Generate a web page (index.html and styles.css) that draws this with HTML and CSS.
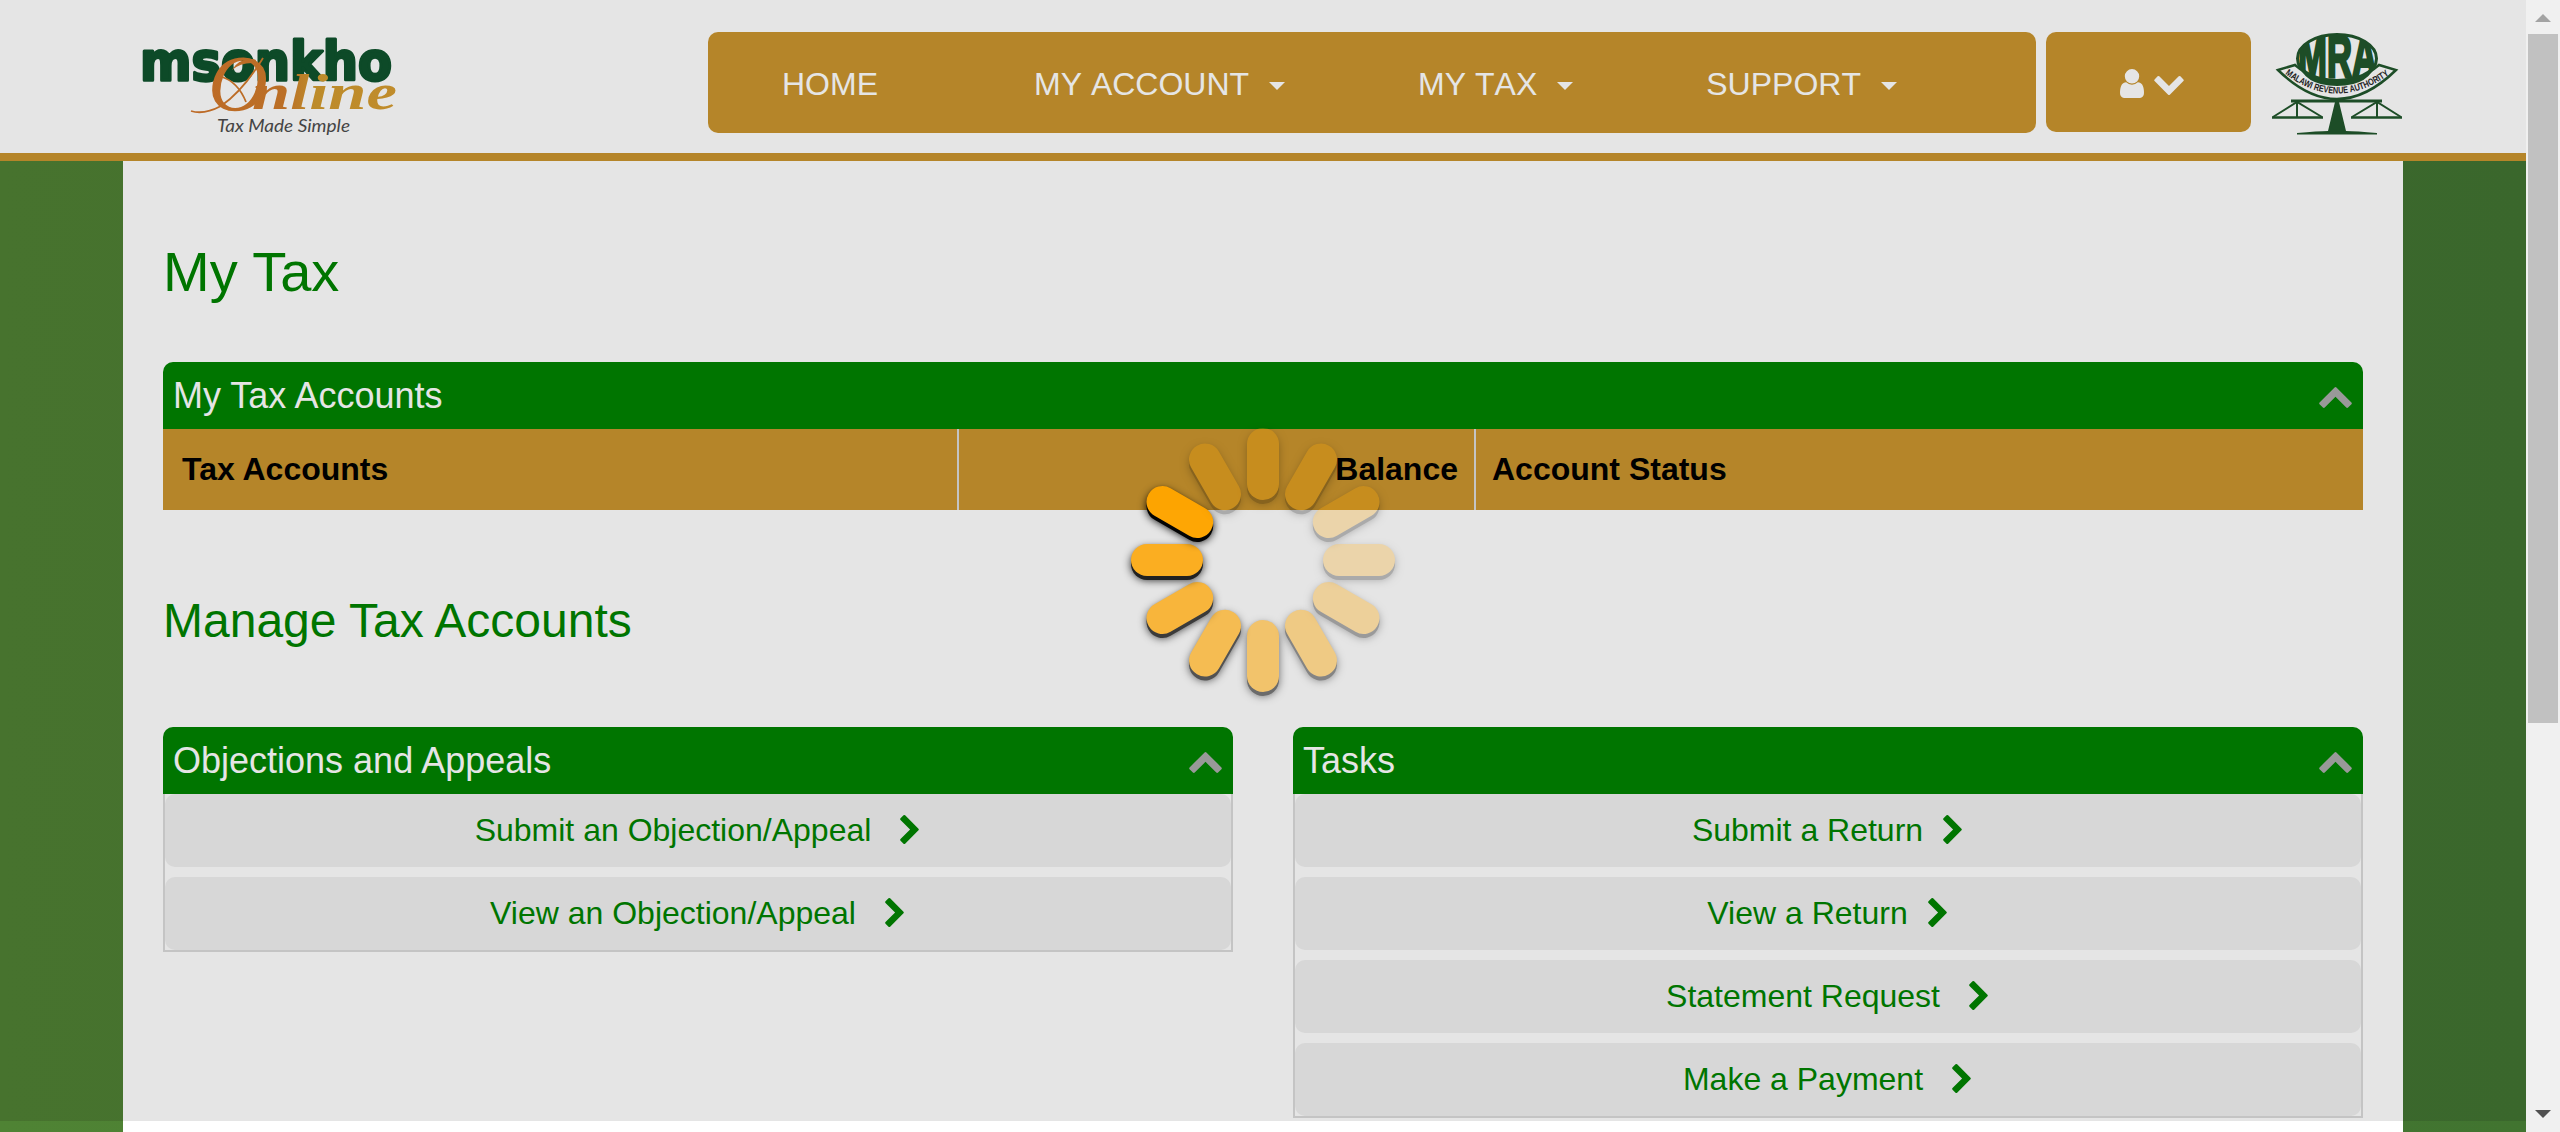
FILE: index.html
```html
<!DOCTYPE html>
<html lang="en">
<head>
<meta charset="utf-8">
<title>Msonkho Online - My Tax</title>
<link rel="stylesheet" href="styles.css">
</head>
<body>
<svg class="defs" width="0" height="0" aria-hidden="true">
  <symbol id="chevron-right" viewBox="154 109 1036 1612"><path d="M1171 960l-742 742q-19 19-45 19t-45-19l-166-166q-19-19-19-45t19-45l531-531-531-531q-19-19-19-45t19-45l166-166q19-19 45-19t45 19l742 742q19 19 19 45t-19 45z"/></symbol>
  <symbol id="chevron-up" viewBox="0 0 1612 1036"><path transform="translate(-109 1190) rotate(-90)" d="M1171 960l-742 742q-19 19-45 19t-45-19l-166-166q-19-19-19-45t19-45l531-531-531-531q-19-19-19-45t19-45l166-166q19-19 45-19t45 19l742 742q19 19 19 45t-19 45z"/></symbol>
  <symbol id="user" viewBox="0 128 1280 1536"><path d="M1280 1399q0 109-62.500 187t-150.500 78h-854q-88 0-150.500-78t-62.500-187q0-85 8.500-160.500t31.500-152 58.500-131 94-89 134.500-34.500q131 128 313 128t313-128q76 0 134.500 34.500t94 89 58.500 131 31.500 152 8.500 160.500zm-256-887q0 159-112.500 271.500t-271.500 112.500-271.500-112.500-112.500-271.500 112.500-271.500 271.500-112.500 271.500 112.500 112.500 271.500z"/></symbol>
</svg>

<div class="page">
  <header class="header">
    <svg class="logo" width="270" height="120" viewBox="135 26 270 120" role="img" aria-label="Msonkho Online">
      <defs><linearGradient id="gold" gradientUnits="userSpaceOnUse" x1="190" y1="0" x2="397" y2="0"><stop offset="0" stop-color="#bd6a27"/><stop offset=".46" stop-color="#bb6f26"/><stop offset=".6" stop-color="#bd8b2a"/><stop offset="1" stop-color="#c08c2b"/></linearGradient></defs>
      <text class="logo-name" x="140" y="80" textLength="252" lengthAdjust="spacingAndGlyphs">msonkho</text>
      <path d="M191 111q13 4 30-5 22-15 42-48M222 77q16 5 24 25" fill="none" stroke="url(#gold)" stroke-width="1.800"/>
      <path d="M232 70q6-11 20-11 6 0 3 4-14-1-23 7z" fill="url(#gold)"/>
      <text class="logo-script logo-initial" x="208" y="111" textLength="60" lengthAdjust="spacingAndGlyphs">O</text>
      <text class="logo-script" x="252" y="109" textLength="145" lengthAdjust="spacingAndGlyphs">nline</text>
      <text class="logo-tag" x="217" y="132" textLength="133" lengthAdjust="spacingAndGlyphs">Tax Made Simple</text>
    </svg>
    <nav class="nav">
      <a class="nav-link nav-home">HOME</a>
      <a class="nav-link">MY ACCOUNT<i class="caret"></i></a>
      <a class="nav-link">MY TAX<i class="caret"></i></a>
      <a class="nav-link">SUPPORT<i class="caret"></i></a>
    </nav>
    <button class="user-button" aria-label="Account">
      <svg width="24" height="29"><use href="#user"/></svg>
      <svg class="down" width="30" height="19"><use href="#chevron-up"/></svg>
    </button>
    <svg class="mra" width="140" height="120" viewBox="2268 20 140 120" role="img" aria-label="Malawi Revenue Authority">
      <defs>
        <path id="ribbon" d="M2285 74Q2337 113 2390 74"/>
        <clipPath id="oval"><ellipse cx="2337" cy="58" rx="40" ry="24"/></clipPath>
      </defs>
      <path d="M2278 70L2295 65Q2337 100 2379 65L2396 70Q2337 128 2278 70Z" fill="#e5e5e5" stroke="#1d4d27" stroke-width="2.500"/>
      <ellipse cx="2337" cy="58.500" rx="39.500" ry="24" fill="#e5e5e5" stroke="#1d4d27" stroke-width="3"/>
      <g clip-path="url(#oval)"><text class="mra-name" x="2298" y="77" textLength="79" lengthAdjust="spacingAndGlyphs">MRA</text></g>
      <path d="M2297 60Q2306 78 2337 79Q2368 78 2377 60Q2371 86 2337 86Q2303 86 2297 60Z" fill="#1d4d27"/>
      <text class="mra-ribbon"><textPath href="#ribbon" textLength="113" lengthAdjust="spacingAndGlyphs">MALAWI REVENUE AUTHORITY</textPath></text>
      <g fill="none" stroke="#1d4d27" stroke-width="2">
        <path d="M2291 101H2382" stroke-width="3"/>
        <path d="M2272 117.500H2323M2351 117.500H2402" stroke-width="2.500"/>
        <path d="M2273 117L2297 102L2322 117M2297 101V117M2352 117L2377 102L2401 117M2377 101V117"/>
      </g>
      <path d="M2335 102H2339L2346 131Q2356 131 2377 133V134.500H2297V133Q2318 131 2328 131Z" fill="#1d4d27"/>
    </svg>
  </header>

  <main class="content">
    <h1 class="title">My Tax</h1>
    <section class="panel">
      <h2 class="panel-head">My Tax Accounts<svg width="33" height="21"><use href="#chevron-up"/></svg></h2>
      <div class="table-head">
        <div class="cell">Tax Accounts</div>
        <div class="cell cell-right">Balance</div>
        <div class="cell">Account Status</div>
      </div>
    </section>
    <h2 class="subtitle">Manage Tax Accounts</h2>
    <div class="columns">
      <section class="panel">
        <h2 class="panel-head">Objections and Appeals<svg width="33" height="21"><use href="#chevron-up"/></svg></h2>
        <div class="links">
          <a class="row wide">Submit an Objection/Appeal<svg width="19" height="29"><use href="#chevron-right"/></svg></a>
          <a class="row wide">View an Objection/Appeal<svg width="19" height="29"><use href="#chevron-right"/></svg></a>
        </div>
      </section>
      <section class="panel">
        <h2 class="panel-head">Tasks<svg width="33" height="21"><use href="#chevron-up"/></svg></h2>
        <div class="links">
          <a class="row">Submit a Return<svg width="19" height="29"><use href="#chevron-right"/></svg></a>
          <a class="row">View a Return<svg width="19" height="29"><use href="#chevron-right"/></svg></a>
          <a class="row wide">Statement Request<svg width="19" height="29"><use href="#chevron-right"/></svg></a>
          <a class="row wide">Make a Payment<svg width="19" height="29"><use href="#chevron-right"/></svg></a>
        </div>
      </section>
    </div>
  </main>
  <div class="page-end"><div class="page-end-body"></div></div>

  <div class="spinner">
    <div class="blade" style="--a:-90deg;opacity:.25"><i></i><b></b></div>
    <div class="blade" style="--a:-60deg;opacity:.25"><i></i><b></b></div>
    <div class="blade" style="--a:-30deg;opacity:.25"><i></i><b></b></div>
    <div class="blade" style="--a:0deg;opacity:.25"><i></i><b></b></div>
    <div class="blade" style="--a:30deg;opacity:.32"><i></i><b></b></div>
    <div class="blade" style="--a:60deg;opacity:.42"><i></i><b></b></div>
    <div class="blade" style="--a:90deg;opacity:.53"><i></i><b></b></div>
    <div class="blade" style="--a:120deg;opacity:.64"><i></i><b></b></div>
    <div class="blade" style="--a:150deg;opacity:.74"><i></i><b></b></div>
    <div class="blade" style="--a:180deg;opacity:.85"><i></i><b></b></div>
    <div class="blade" style="--a:210deg;opacity:.98"><i></i><b></b></div>
    <div class="blade" style="--a:240deg;opacity:.25"><i></i><b></b></div>
  </div>
</div>

<div class="scrollbar">
  <i class="arrow arrow-up"></i>
  <div class="thumb"></div>
  <i class="arrow arrow-down"></i>
</div>
</body>
</html>
```

FILE: styles.css
```css
* { box-sizing: border-box; }

body {
  margin: 0;
  display: flex;
  width: 2560px;
  height: 1132px;
  overflow: hidden;
  font-family: "Liberation Sans", Arial, sans-serif;
  font-size: 32px;
  color: #007500;
}

.defs { position: absolute; }
svg { display: block; flex: none; fill: currentColor; }

.page {
  position: relative;
  display: flex;
  flex-direction: column;
  width: 2526px;
  height: 1132px;
  background: linear-gradient(90deg, #47732e, #3a672c);
}

/* Header */
.header {
  display: flex;
  align-items: flex-start;
  height: 161px;
  padding: 32px 0 0 135px;
  background: #e5e5e5;
  border-bottom: 8px solid #b58529;
}
.logo { margin: -6px 303px 0 0; }
.logo-name { font: 900 53px "DejaVu Sans", sans-serif; fill: #0d4a28; stroke: #0d4a28; stroke-width: 3px; stroke-linejoin: round; }
.logo-script { font: italic 700 51px "Liberation Serif", serif; fill: url(#gold); }
.logo-initial { font-weight: 400; font-size: 80px; }
.logo-tag { font: italic 18px Lato, sans-serif; fill: #444; }

.nav {
  display: flex;
  align-items: center;
  gap: 133px;
  width: 1328px;
  height: 101px;
  padding: 2px 0 0 74px;
  border-radius: 10px;
  background: #b58529;
  color: #e5e5e5;
  font-kerning: none;
}
.nav-link { display: flex; align-items: center; white-space: nowrap; line-height: 36px; }
.nav-home { margin-right: 23px; }
.caret {
  margin: 5px 0 0 20px;
  border: 8px solid transparent;
  border-top-color: #e5e5e5;
  border-bottom: 0;
}
.user-button {
  display: flex;
  justify-content: center;
  align-items: center;
  gap: 10px;
  width: 205px;
  height: 100px;
  margin: 0 17px 0 10px;
  padding: 3px 0 0 6px;
  border: 0;
  border-radius: 10px;
  background: #b58529;
  color: #e5e5e5;
}
.down { transform: rotate(180deg); margin-top: 4px; }
.mra { margin-top: -12px; }
.mra-name { font: 700 60px "Liberation Sans", sans-serif; fill: #1d4d27; stroke: #1d4d27; stroke-width: 3px; }
.mra-ribbon { font: 700 9.5px "Liberation Sans", sans-serif; fill: #222; }

/* Content */
.content {
  width: 2280px;
  height: 960px;
  margin: 0 auto;
  padding: 0 40px;
  background: #e5e5e5;
}
.title { margin: 0; padding-top: 79px; height: 201px; font-size: 56px; line-height: 64px; font-weight: 400; }
.subtitle { margin: 0; padding-top: 83px; height: 217px; font-size: 48px; line-height: 56px; font-weight: 400; }

.panel-head {
  display: flex;
  justify-content: space-between;
  align-items: center;
  height: 67px;
  margin: 0;
  padding: 0 11px 0 10px;
  border-radius: 10px 10px 0 0;
  background: #007500;
  color: #e5e5e5;
  font-size: 36px;
  line-height: 40px;
  font-weight: 400;
}
.panel-head svg { color: #999; margin-top: 3px; }

.table-head {
  display: grid;
  grid-template-columns: 796px 517px 1fr;
  height: 81px;
  background: #b58529;
  color: #000;
  font-weight: 700;
}
.cell { padding: 22px 16px 0; line-height: 36px; border-right: 2px solid #c4c4c4; }
.cell:first-child { padding-left: 19px; }
.cell:last-child { border-right: 0; }
.cell-right { text-align: right; }

.columns { display: grid; grid-template-columns: 1fr 1fr; gap: 60px; align-items: start; }
.links {
  display: flex;
  flex-direction: column;
  gap: 10px;
  border: solid #c4c4c4;
  border-width: 0 2px 2px;
}
.row {
  display: flex;
  justify-content: center;
  align-items: center;
  gap: 20px;
  height: 73px;
  padding-right: 2px;
  border-radius: 10px;
  background: #d7d7d7;
}
.row.wide { gap: 29px; }
.row svg { margin-bottom: 3px; }

/* Strip below the dimmed area */
.page-end { height: 11px; background: linear-gradient(90deg, #4f8334, #417430); }
.page-end-body { width: 2280px; height: 11px; margin: 0 auto; background: #fff; }

/* Loading spinner floats over the page */
.spinner { position: absolute; left: 1263px; top: 560px; }
.blade { position: absolute; left: 0; top: 0; }
.blade i, .blade b {
  position: absolute;
  left: -36px;
  top: -16px;
  width: 72px;
  height: 32px;
  border-radius: 16px;
  transform: rotate(var(--a)) translateX(96px);
}
.blade i { margin-top: 4px; background: #000; box-shadow: 0 0 8px #000; }
.blade b { background: #ffa500; box-shadow: 0 0 2px rgba(0, 0, 0, .1); }

/* Browser scrollbar */
.scrollbar {
  display: flex;
  flex-direction: column;
  align-items: center;
  width: 34px;
  height: 1132px;
  background: #f0f0f0;
}
.thumb { width: 30px; height: 689px; margin-top: 12px; background: #c1c1c1; }
.arrow { border: 8px solid transparent; }
.arrow-up { margin-top: 14px; border-top: 0; border-bottom-color: #a3a3a3; }
.arrow-down { margin-top: 387px; border-bottom: 0; border-top-color: #505050; }
```
